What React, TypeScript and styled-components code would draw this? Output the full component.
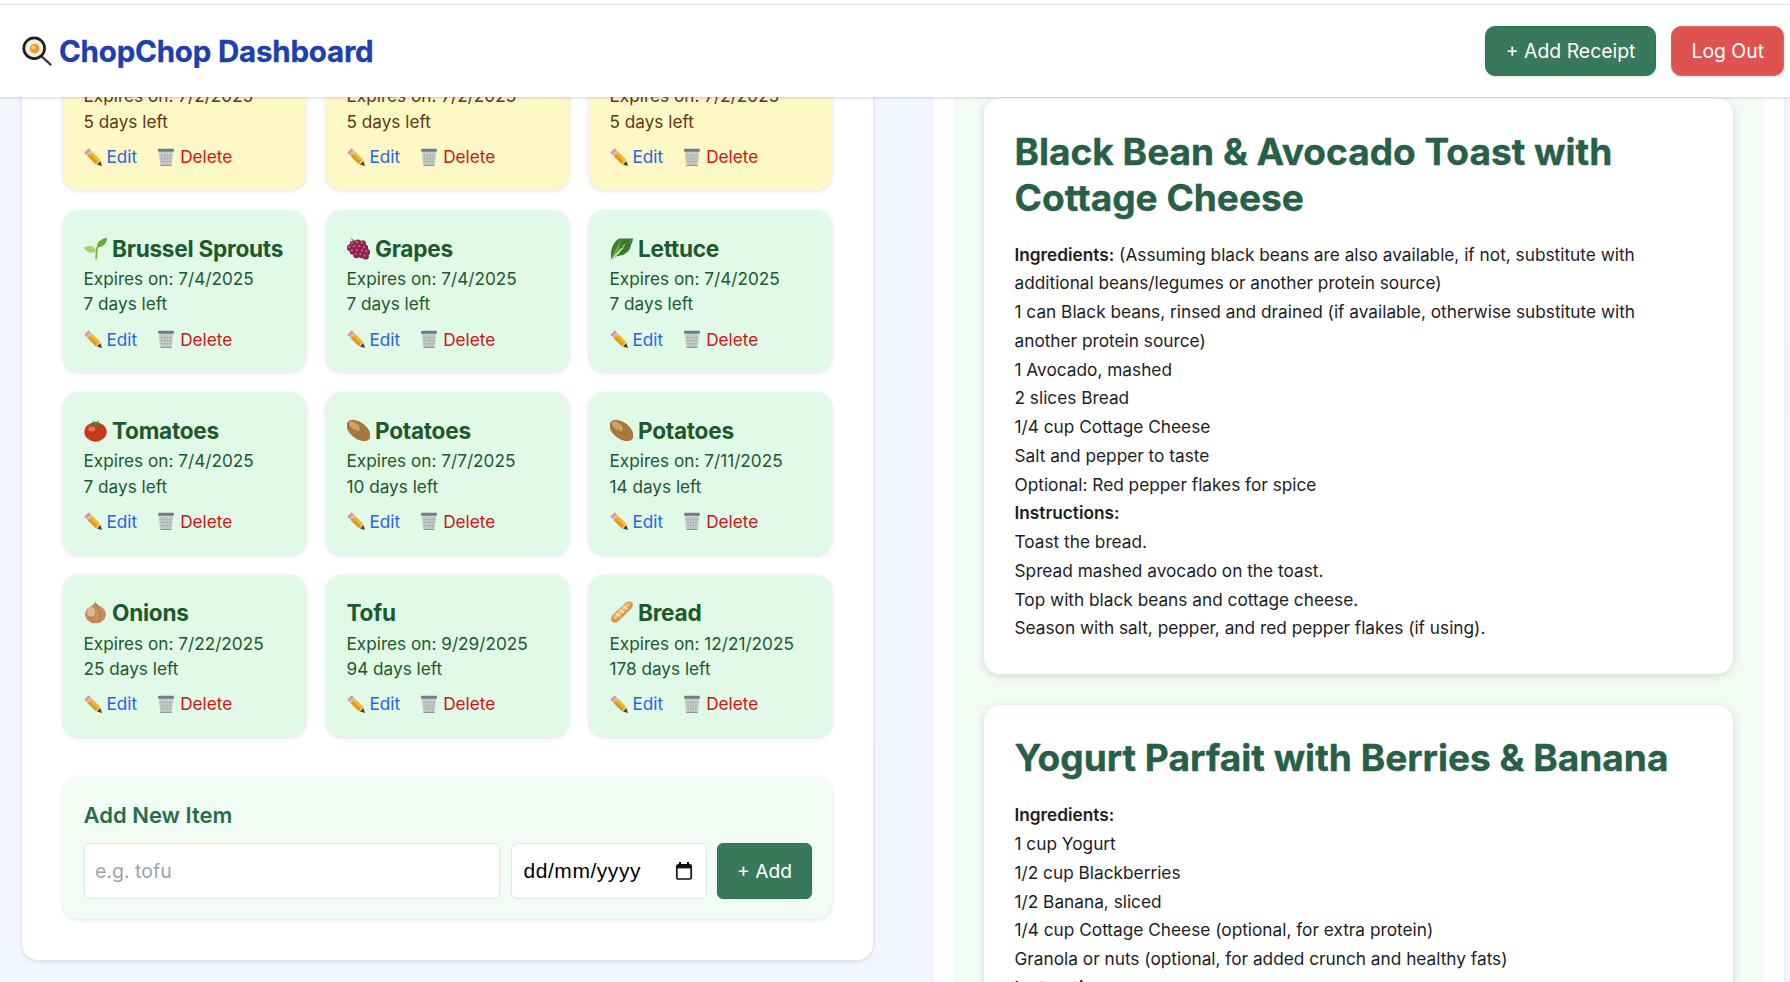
import React from "react";
import styled, { createGlobalStyle } from "styled-components";

const GlobalStyle = createGlobalStyle`
    * { box-sizing: border-box; }
    html, body { margin: 0; padding: 0; height: 100%; }
    body {
        font-family: Inter, "Liberation Sans", sans-serif;
        background: linear-gradient(135deg, #f3f7ff 0%, #f2f5fe 100%);
        overflow: hidden;
    }
`;

const Page = styled.div`
    display: flex;
    flex-direction: column;
    height: 982px;
    overflow: hidden;
`;
const TopStrip = styled.div`
    height: 5px;
    flex: none;
    background: #fff;
    border-bottom: 1px solid #e3e4e6;
`;
const Header = styled.header`
    position: relative;
    z-index: 2;
    flex: none;
    height: 92px;
    padding: 0 6px 0 22px;
    display: flex;
    align-items: center;
    justify-content: space-between;
    background: #fff;
    box-shadow: 0 1px 3px rgba(0, 0, 0, 0.16);
`;
const Brand = styled.h1`
    margin: 0;
    display: flex;
    align-items: center;
    gap: 7px;
    font-size: 29.5px;
    font-weight: 700;
    letter-spacing: -0.2px;
    color: #1e40af;
    -webkit-text-stroke: 0.3px #1e40af;
`;
const HeaderActions = styled.div`
    display: flex;
    gap: 15.5px;
`;
const HeaderButton = styled.button<{ $danger?: boolean }>`
    height: 50px;
    padding: 0 ${({ $danger }) => ($danger ? "19px" : "19.5px")};
    font: 400 19.4px Inter, sans-serif;
    color: #fff;
    border-radius: 10px;
    background: ${({ $danger }) => ($danger ? "#de5250" : "#38795b")};
    border: 1px solid ${({ $danger }) => ($danger ? "#e06461" : "#2b7553")};
    box-shadow: 0 1px 3px rgba(0, 0, 0, 0.12);
`;
const Body = styled.main`
    flex: 1;
    min-height: 0;
    overflow: hidden;
    display: grid;
    grid-template-columns: 851px 851px;
    gap: 60px;
    padding: 0 6px 0 22px;
    align-items: start;
`;
const LeftPanel = styled.section`
    margin-top: -65.4px;
    padding: 31px 41px 41px;
    background: #fff;
    border-radius: 16px;
    box-shadow: 0 1px 4px rgba(0, 0, 0, 0.14);
`;
const CardGrid = styled.div`
    display: grid;
    grid-template-columns: repeat(3, 243px);
    justify-content: space-between;
    row-gap: 20px;
`;
const ItemCard = styled.article<{ $soon?: boolean }>`
    padding: 20.8px 20px 20.8px 20.5px;
    border-radius: 16px;
    background: ${({ $soon }) => ($soon ? "#fdf8c6" : "#e1f9e7")};
    color: ${({ $soon }) => ($soon ? "#63370f" : "#1c5a2c")};
    box-shadow: 0 1px 4px rgba(0, 0, 0, 0.13);
`;
const ItemName = styled.h3`
    margin: 0 0 2px;
    padding-top: 1.5px;
    display: flex;
    align-items: center;
    gap: 5.5px;
    height: 33px;
    font-size: 22.6px;
    font-weight: 700;
    letter-spacing: -0.25px;
    white-space: nowrap;
`;
const ItemLine = styled.p`
    margin: 0;
    font-size: 17.2px;
    line-height: 25.5px;
`;
const ItemActions = styled.div`
    margin-top: 9.8px;
    display: flex;
    gap: 20px;
    height: 25px;
    font-size: 17.2px;
    line-height: 25px;
`;
const ItemAction = styled.a<{ $danger?: boolean }>`
    display: flex;
    align-items: center;
    gap: 5px;
    color: ${({ $danger }) => ($danger ? "#cf1414" : "#2563eb")};
`;
const AddCard = styled.form`
    margin-top: 40px;
    padding: 21px 20px 20.5px 20.5px;
    border-radius: 16px;
    background: #f0fcf4;
    box-shadow: 0 1px 4px rgba(0, 0, 0, 0.12);
`;
const AddTitle = styled.h4`
    margin: 0 0 15px;
    height: 30px;
    line-height: 34px;
    font-size: 22px;
    font-weight: 600;
    color: #276e4e;
`;
const AddRow = styled.div`
    display: flex;
    gap: 10.5px;
`;
const NameInput = styled.input`
    flex: 1;
    min-width: 0;
    height: 55.5px;
    padding: 1px 10.5px 0;
    font: 400 19.5px Inter, sans-serif;
    background: #fff;
    border: 1px solid #e2e6ea;
    border-radius: 6px;
    &::placeholder {
        color: #9ca3af;
    }
`;
const DateField = styled.div`
    flex: none;
    width: 196px;
    height: 55.5px;
    padding: 0 13px 0 12px;
    display: flex;
    align-items: center;
    justify-content: space-between;
    font: 400 21px "Liberation Sans", sans-serif;
    letter-spacing: 0.55px;
    background: #fff;
    border: 1px solid #e2e6ea;
    border-radius: 6px;
`;
const AddButton = styled.button`
    flex: none;
    width: 95px;
    height: 55.5px;
    font: 400 19.2px Inter, sans-serif;
    color: #fff;
    background: #38795b;
    border: 1px solid #2b7553;
    border-radius: 6px;
`;
const RightPanel = styled.section`
    margin-top: -51px;
    padding: 20px;
    background: #fff;
    box-shadow: 0 1px 3px rgba(0, 0, 0, 0.05);
`;
const RecipeList = styled.div`
    padding: 32px 31px;
    display: flex;
    flex-direction: column;
    gap: 30.5px;
    background: #f2fcf5;
`;
const RecipeCard = styled.article`
    padding: 30.5px 33px 31px 30.5px;
    background: #fff;
    border-radius: 16px;
    box-shadow: 0 2px 8px rgba(0, 0, 0, 0.14);
`;
const RecipeTitle = styled.h2`
    margin: 0 0 20.2px;
    font-size: 37.05px;
    line-height: 46px;
    font-weight: 700;
    color: #276047;
    -webkit-text-stroke: 0.35px #276047;
`;
const RecipeLine = styled.div`
    font-size: 17.25px;
    line-height: 28.75px;
    color: #1d1d1f;
    b {
        font-weight: 600;
    }
`;

const EmojiSvg = styled.svg<{ $size: number }>`
    flex: none;
    width: ${({ $size }) => $size}px;
    height: ${({ $size }) => $size}px;
`;

type EmojiName = "pan" | "seedling" | "grapes" | "lettuce" | "tomato" | "potato" | "onion" | "bread";

const Emoji = ({ name, size = 24 }: { name: EmojiName; size?: number }) => (
    <EmojiSvg $size={size} viewBox="0 0 32 32">
        {name === "pan" && (
            <>
                <path d="M20 21 L30.5 30.5" stroke="#3a3a3a" strokeWidth="2.4" strokeLinecap="round" />
                <circle cx="13" cy="13" r="12.5" fill="#1d1d1d" />
                <circle cx="13" cy="13" r="9.6" fill="#f4efe2" />
                <circle cx="13.5" cy="13.5" r="5.2" fill="#e9a22f" />
                <circle cx="12" cy="12" r="1.8" fill="#fbdc85" />
            </>
        )}
        {name === "seedling" && (
            <>
                <path d="M17 31 C17 22 17 16 20 11" stroke="#7dab3e" strokeWidth="2.4" fill="none" />
                <path d="M18 14 C18 7 24 2 32 1 C32 9 26 15 18 14 Z" fill="#66ab35" />
                <path d="M17 19 C14 12 7 11 0 15 C3 22 11 24 17 19 Z" fill="#a9cf72" />
            </>
        )}
        {name === "grapes" && (
            <>
                <path d="M5 1 L9 8 L13 6 Z" fill="#6d9a3a" />
                {[[8, 10], [15, 8], [22, 9], [4, 15], [11, 14], [18, 14], [25, 15], [8, 20], [15, 19], [22, 20], [28, 21], [13, 25], [20, 25], [26, 27]].map(([x, y]) => (
                    <g key={`${x}-${y}`}>
                        <circle cx={x} cy={y} r="4.4" fill="#8e2452" />
                        <circle cx={x - 1.2} cy={y - 1.2} r="1.6" fill="#c65f8c" />
                    </g>
                ))}
            </>
        )}
        {name === "lettuce" && (
            <>
                <path d="M2 31 C-1 19 6 3 14 2 L32 2 C32 6 30 8 29 12 C28 20 20 26 8 27 Z" fill="#3f7d2c" />
                <path d="M2 31 C3 22 10 16 15 3 C12 16 13 21 8 27 Z" fill="#6ea545" />
                <path d="M2 31 C7 24 14 18 21 9 C20 16 12 24 4 30 Z" fill="#d9e8a6" />
                <path d="M18 8 L24 5 M16 15 L27 10 M14 20 L25 17" stroke="#2f6321" strokeWidth="1.1" fill="none" />
            </>
        )}
        {name === "tomato" && (
            <>
                <ellipse cx="16" cy="18" rx="15.5" ry="13.5" fill="#c53a1e" />
                <ellipse cx="11" cy="14" rx="5" ry="3.5" fill="#e2735a" />
                <path d="M16 5 L11 2 L14 7 L8 8 L15 9 L17 11 L18 9 L25 8 L19 7 L21 2 Z" fill="#4f7d2c" />
            </>
        )}
        {name === "potato" && (
            <>
                <ellipse cx="16" cy="16" rx="19" ry="11.5" transform="rotate(38 16 16)" fill="#a8763f" />
                <ellipse cx="10.5" cy="10" rx="9" ry="4.5" transform="rotate(38 10.5 10)" fill="#cfa468" />
                <circle cx="22" cy="21" r="0.9" fill="#6f4a24" />
                <circle cx="12" cy="14" r="0.8" fill="#8a5f30" />
            </>
        )}
        {name === "onion" && (
            <>
                <path d="M16 0 C16 5 25 7 29 13 C34 22 26 31 16 31 C6 31 -2 22 3 13 C7 7 16 5 16 0 Z" fill="#c78d5c" />
                <path d="M16 5 C10 12 7 20 12 30 M16 5 C22 12 25 20 20 30" stroke="#9e6a3e" strokeWidth="0.9" fill="none" />
                <ellipse cx="10" cy="15" rx="5.5" ry="7" fill="#e9c8a5" opacity="0.75" />
            </>
        )}
        {name === "bread" && (
            <>
                <path d="M3 29 C0 26 1 22 5 18 L20 4 C24 0 29 0 31 2 C33 5 31 9 28 12 L13 27 C9 31 6 31 3 29 Z" fill="#d19a4e" />
                <path d="M5 20 L21 5 C25 2 28 2 29 3 C25 9 16 18 8 25 C5 26 4 23 5 20 Z" fill="#eec183" />
                <path d="M9 18 L14 21 M14 13 L19 16 M19 8 L24 11" stroke="#fbeed2" strokeWidth="1.8" strokeLinecap="round" />
            </>
        )}
    </EmojiSvg>
);

const PencilIcon = () => (
    <EmojiSvg $size={18} viewBox="0 0 18 18">
        <path d="M4.7 0.3 L0.3 4.7 L2.3 6.7 L6.7 2.3 Z" fill="#e58d9b" />
        <path d="M2.3 6.7 L6.7 2.3 L8.2 3.8 L3.8 8.2 Z" fill="#bfc1c4" />
        <path d="M3.8 8.2 L8.2 3.8 L16.2 11.8 L11.8 16.2 Z" fill="#f3b62f" />
        <path d="M3.8 8.2 L6 6 L14 14 L11.8 16.2 Z" fill="#e09a1c" />
        <path d="M11.8 16.2 L16.2 11.8 L17.9 17.9 Z" fill="#ecd0a4" />
        <path d="M16.4 13 L17.9 17.9 L13 16.4 Z" fill="#4a4038" />
    </EmojiSvg>
);

const TrashIcon = () => (
    <EmojiSvg $size={18} viewBox="0 0 18 18">
        <path d="M1.6 3 L16.4 3 L14.8 17 C14.7 17.7 14.2 18 13.6 18 L4.4 18 C3.8 18 3.3 17.7 3.2 17 Z" fill="#c9cfcb" />
        <path d="M4.5 5 L5.6 17 M7.6 5 L8 17 M10.4 5 L10 17 M13.5 5 L12.4 17 M2.4 7.5 L15.6 7.5 M2.8 10.5 L15.2 10.5 M3 13.5 L15 13.5" stroke="#a9b0ac" strokeWidth="0.7" />
        <path d="M3.2 17 C3.3 17.7 3.8 18 4.4 18 L13.6 18 C14.2 18 14.7 17.7 14.8 17 Z" fill="#8d959a" />
        <rect x="1" y="0.8" width="16" height="3" rx="1.2" fill="#6f7d8a" />
    </EmojiSvg>
);

const CalendarIcon = () => (
    <EmojiSvg $size={18} viewBox="0 0 18 18">
        <path d="M5 0 V3 M13 0 V3" stroke="#111" strokeWidth="2" />
        <rect x="1.8" y="2.8" width="14.4" height="14.2" rx="1.6" fill="none" stroke="#111" strokeWidth="1.7" />
        <rect x="2" y="2.8" width="14" height="3.6" fill="#111" />
    </EmojiSvg>
);

type Item = { emoji?: EmojiName; name?: string; expires: string; left: string; soon?: boolean };

const items: Item[] = [
    { expires: "7/2/2025", left: "5 days left", soon: true },
    { expires: "7/2/2025", left: "5 days left", soon: true },
    { expires: "7/2/2025", left: "5 days left", soon: true },
    { emoji: "seedling", name: "Brussel Sprouts", expires: "7/4/2025", left: "7 days left" },
    { emoji: "grapes", name: "Grapes", expires: "7/4/2025", left: "7 days left" },
    { emoji: "lettuce", name: "Lettuce", expires: "7/4/2025", left: "7 days left" },
    { emoji: "tomato", name: "Tomatoes", expires: "7/4/2025", left: "7 days left" },
    { emoji: "potato", name: "Potatoes", expires: "7/7/2025", left: "10 days left" },
    { emoji: "potato", name: "Potatoes", expires: "7/11/2025", left: "14 days left" },
    { emoji: "onion", name: "Onions", expires: "7/22/2025", left: "25 days left" },
    { name: "Tofu", expires: "9/29/2025", left: "94 days left" },
    { emoji: "bread", name: "Bread", expires: "12/21/2025", left: "178 days left" },
];

const recipes: { title: string; lines: React.ReactNode[] }[] = [
    {
        title: "Black Bean & Avocado Toast with Cottage Cheese",
        lines: [
            <><b>Ingredients:</b> (Assuming black beans are also available, if not, substitute with additional beans/legumes or another protein source)</>,
            "1 can Black beans, rinsed and drained (if available, otherwise substitute with another protein source)",
            "1 Avocado, mashed",
            "2 slices Bread",
            "1/4 cup Cottage Cheese",
            "Salt and pepper to taste",
            "Optional: Red pepper flakes for spice",
            <b>Instructions:</b>,
            "Toast the bread.",
            "Spread mashed avocado on the toast.",
            "Top with black beans and cottage cheese.",
            "Season with salt, pepper, and red pepper flakes (if using).",
        ],
    },
    {
        title: "Yogurt Parfait with Berries & Banana",
        lines: [
            <b>Ingredients:</b>,
            "1 cup Yogurt",
            "1/2 cup Blackberries",
            "1/2 Banana, sliced",
            "1/4 cup Cottage Cheese (optional, for extra protein)",
            "Granola or nuts (optional, for added crunch and healthy fats)",
            <b>Instructions:</b>,
        ],
    },
];

export default function App() {
    return (
        <Page>
            <GlobalStyle />
            <TopStrip />
            <Header>
                <Brand>
                    <Emoji name="pan" size={30} />
                    ChopChop Dashboard
                </Brand>
                <HeaderActions>
                    <HeaderButton>+ Add Receipt</HeaderButton>
                    <HeaderButton $danger>Log Out</HeaderButton>
                </HeaderActions>
            </Header>
            <Body>
                <LeftPanel>
                    <CardGrid>
                        {items.map((item, i) => (
                            <ItemCard key={i} $soon={item.soon}>
                                {item.name && (
                                    <ItemName>
                                        {item.emoji && <Emoji name={item.emoji} size={23} />}
                                        {item.name}
                                    </ItemName>
                                )}
                                <ItemLine>Expires on: {item.expires}</ItemLine>
                                <ItemLine>{item.left}</ItemLine>
                                <ItemActions>
                                    <ItemAction>
                                        <PencilIcon />
                                        Edit
                                    </ItemAction>
                                    <ItemAction $danger>
                                        <TrashIcon />
                                        Delete
                                    </ItemAction>
                                </ItemActions>
                            </ItemCard>
                        ))}
                    </CardGrid>
                    <AddCard>
                        <AddTitle>Add New Item</AddTitle>
                        <AddRow>
                            <NameInput placeholder="e.g. tofu" />
                            <DateField>
                                dd/mm/yyyy
                                <CalendarIcon />
                            </DateField>
                            <AddButton type="button">+ Add</AddButton>
                        </AddRow>
                    </AddCard>
                </LeftPanel>
                <RightPanel>
                    <RecipeList>
                        {recipes.map((recipe) => (
                            <RecipeCard key={recipe.title}>
                                <RecipeTitle>{recipe.title}</RecipeTitle>
                                {recipe.lines.map((line, i) => (
                                    <RecipeLine key={i}>{line}</RecipeLine>
                                ))}
                            </RecipeCard>
                        ))}
                    </RecipeList>
                </RightPanel>
            </Body>
        </Page>
    );
}
